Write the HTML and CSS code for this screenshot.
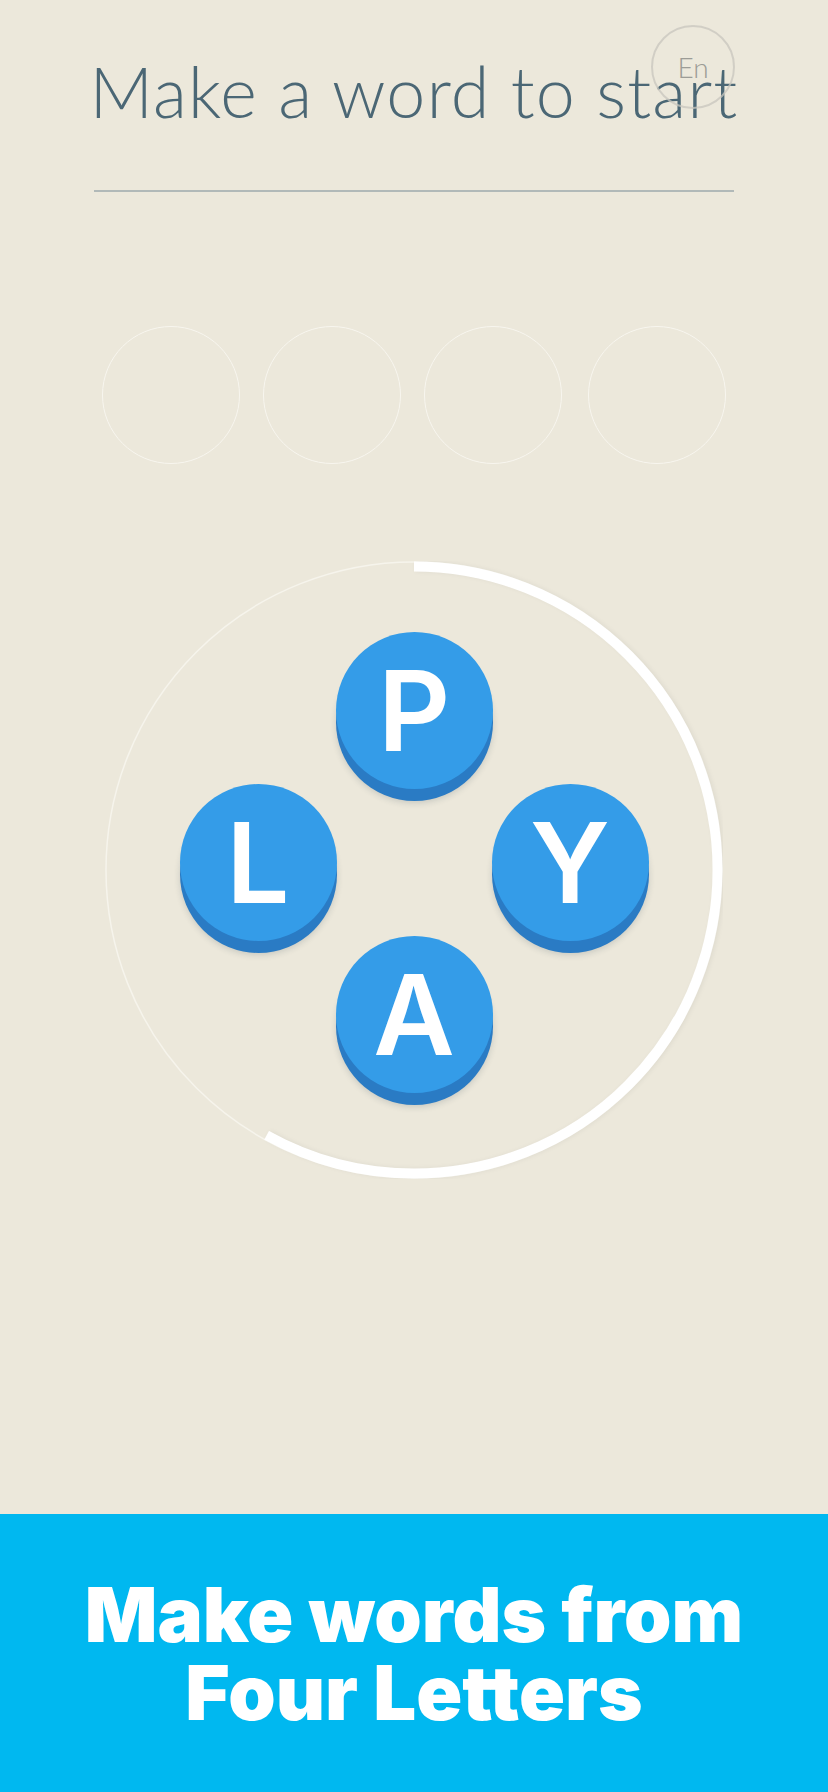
FILE: index.html
```html
<!DOCTYPE html>
<html lang="en">
<head>
<meta charset="utf-8">
<title>Make a word to start</title>
<link rel="stylesheet" href="styles.css">
</head>
<body>
<div class="app">
  <header class="header">
    <h1 class="title">Make a word to start</h1>
    <div class="lang">En</div>
  </header>
  <div class="rule"></div>
  <div class="slots">
    <div class="slot"></div>
    <div class="slot"></div>
    <div class="slot"></div>
    <div class="slot last"></div>
  </div>
  <div class="wheel">
    <svg class="ring" width="618" height="618" viewBox="0 0 618 618">
      <circle class="ring-thin" cx="309" cy="309" r="308"/>
      <circle class="ring-arc" cx="309" cy="309" r="303.5" stroke-dasharray="1107 2000" transform="rotate(-90 309 309)"/>
    </svg>
    <div class="tiles">
      <div class="tile t-p">P</div>
      <div class="tile t-l">L</div>
      <div class="tile t-y">Y</div>
      <div class="tile t-a">A</div>
    </div>
  </div>
  <footer class="banner">
    <p class="banner-text">Make words from<br>Four Letters</p>
  </footer>
</div>
</body>
</html>
```
FILE: styles.css
```css
html, body {
  margin: 0;
  padding: 0;
}
body {
  background: #ece8db;
  font-family: "Lato", "Liberation Sans", sans-serif;
}
.app {
  width: 828px;
  height: 1792px;
  display: flex;
  flex-direction: column;
  align-items: center;
  overflow: hidden;
}
.header {
  position: relative;
  width: 828px;
  padding-top: 56px;
}
.title {
  margin: 0;
  font-family: "Lato", sans-serif;
  font-weight: 300;
  font-size: 70px;
  line-height: 70px;
  color: #4b6775;
  text-align: center;
  letter-spacing: 1.2px;
}
.lang {
  position: absolute;
  left: 651px;
  top: 25px;
  width: 80px;
  height: 80px;
  border: 2px solid rgba(200, 198, 190, 0.75);
  border-radius: 50%;
  display: flex;
  align-items: center;
  justify-content: center;
  font-family: "Lato", sans-serif;
  font-weight: 300;
  font-size: 28px;
  color: #9c9c96;
}
.rule {
  margin-top: 64px;
  width: 640px;
  height: 2px;
  background: #b1b9b8;
}
.slots {
  margin-top: 134px;
  display: flex;
  gap: 23px;
}
.slot {
  width: 136px;
  height: 136px;
  border: 1.5px solid #f8f6ef;
  border-radius: 50%;
}
.slot.last {
  margin-left: 3px;
}
.wheel {
  margin-top: 97px;
  width: 618px;
  height: 618px;
  display: grid;
}
.ring, .tiles {
  grid-area: 1 / 1;
}
.ring-thin {
  fill: none;
  stroke: #f6f4ec;
  stroke-width: 1.5;
}
.ring-arc {
  fill: none;
  stroke: #ffffff;
  stroke-width: 10;
  filter: drop-shadow(0 2px 2px rgba(0, 0, 0, 0.06));
}
.tiles {
  align-self: start;
  justify-self: center;
  margin-top: 73px;
  display: grid;
  grid-template-columns: repeat(3, 156px);
  grid-template-rows: repeat(3, 152px);
}
.tile {
  width: 157px;
  height: 157px;
  place-self: center;
  border-radius: 50%;
  background: #349ce8;
  box-shadow: 0 12px 0 #2a7bc4, 0 14px 6px rgba(40, 60, 80, 0.18);
  display: flex;
  align-items: center;
  justify-content: center;
  font-family: "Inter", "Noto Sans", sans-serif;
  font-weight: 600;
  font-size: 112px;
  line-height: 1;
  color: #ffffff;
}
.t-p { grid-area: 1 / 2; }
.t-l { grid-area: 2 / 1; }
.t-y { grid-area: 2 / 3; }
.t-a { grid-area: 3 / 2; }
.banner {
  margin-top: auto;
  width: 828px;
  height: 278px;
  background: #00b8f0;
  display: flex;
  align-items: center;
  justify-content: center;
}
.banner-text {
  margin: 0;
  font-family: "Inter", "Lato", sans-serif;
  font-weight: 900;
  font-size: 76px;
  line-height: 78px;
  color: #ffffff;
  text-align: center;
  letter-spacing: 0;
}
```
